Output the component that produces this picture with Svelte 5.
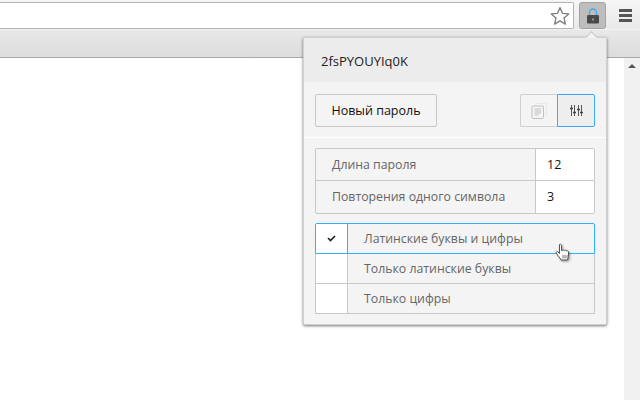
<script lang="ts">
	const settings = [
		{ label: 'Длина пароля', value: '12' },
		{ label: 'Повторения одного символа', value: '3' }
	];
	const modes = [
		{ label: 'Латинские буквы и цифры', active: true },
		{ label: 'Только латинские буквы', active: false },
		{ label: 'Только цифры', active: false }
	];
</script>

<div class="browser">
	<header class="chrome">
		<div class="toolbar">
			<div class="omnibox">
				<svg class="star" width="20" height="20" viewBox="0 0 20 20">
					<path d="M10 1.600l2.500 5.700 6.200.6-4.700 4.100 1.400 6.100-5.400-3.200-5.400 3.200 1.400-6.100L1.300 7.900l6.200-.6z" fill="#fff" stroke="#7c7c7c" stroke-width="1.300" stroke-linejoin="round" />
				</svg>
			</div>
			<div class="ext-button">
				<svg width="14" height="16" viewBox="0 0 14 16">
					<path d="M3.500 7V4.500a3.500 3.500 0 0 1 7 0V7" fill="none" stroke="#45a9ee" stroke-width="1.300" />
					<rect x="1" y="7" width="12" height="8.500" rx="1.200" fill="#4a4a4c" />
					<rect x="6.500" y="10.500" width="1" height="2" fill="#ddd" />
				</svg>
			</div>
			<div class="menu-icon"><span></span><span></span><span></span></div>
		</div>
		<div class="bookmarks"></div>
	</header>
	<main class="page">
		<div class="scrollbar"><span class="arrow"></span></div>
	</main>

	<div class="popup">
		<div class="password">2fsPYOUYIq0K</div>
		<div class="actions">
			<button class="new-password">Новый пароль</button>
			<div class="segmented">
				<button class="seg">
					<svg width="16" height="16" viewBox="0 0 16 16">
						<rect x="4.500" y="0.500" width="11" height="12" rx="1" fill="none" stroke="#e8e8e8" />
						<rect x="1" y="3" width="11.500" height="12.500" rx="1" fill="#f4f4f4" stroke="#c0c0c0" />
						<path d="M3.500 6h6.500M3.500 8h6.500M3.500 10h6.500M3.500 12h4" stroke="#c0c0c0" fill="none" />
					</svg>
				</button>
				<button class="seg selected">
					<svg width="13" height="13" viewBox="0 0 13 13">
						<path d="M1.500 1v11M4.500 1v11M8.500 1v11M11.500 1v11" stroke="#555" fill="none" />
						<path d="M0 4.500h3M3 8.500h3M7 5.500h3M10 8.500h3" stroke="#444" stroke-width="1.300" fill="none" />
					</svg>
				</button>
			</div>
		</div>
		<div class="options">
			<div class="settings">
				{#each settings as row}
					<div class="setting">
						<span class="setting-label">{row.label}</span>
						<span class="setting-value">{row.value}</span>
					</div>
				{/each}
			</div>
			<div class="modes">
				{#each modes as mode}
					<div class="mode" class:active={mode.active}>
						<span class="check">
							{#if mode.active}
								<svg width="9" height="7" viewBox="0 0 9 7">
									<path d="M1 3l2.500 2.500L8 1" fill="none" stroke="#222" stroke-width="1.700" />
								</svg>
							{/if}
						</span>
						<span class="mode-label">{mode.label}</span>
					</div>
				{/each}
			</div>
		</div>
	</div>

	<svg class="cursor" width="17" height="20" viewBox="0 0 17 20">
		<path d="M4.500 1.500c1-.6 2 0 2 1v5l1 .1c.2-.8 1.800-.8 2 .1.400-.7 1.800-.6 2 .3.500-.5 1.900-.2 2 .8v4.700c0 1.500-.8 2-1 3.500H6c-.5-1.500-1.500-2.500-3-4.500L1.300 10c-.5-1 .8-1.900 1.700-1.100l1.500 1.600z" fill="#fff" stroke="#555" />
		<path d="M8 12v3.500M10 12v3.500M12 12v3.500" stroke="#777" fill="none" />
	</svg>
</div>

<style>
	:global(body) {
		margin: 0;
	}

	.browser {
		position: relative;
		width: 640px;
		height: 400px;
		display: flex;
		flex-direction: column;
		overflow: hidden;
		background: #fff;
		font-family: 'Open Sans', sans-serif;
	}

	.chrome {
		height: 58px;
		flex: none;
		background: linear-gradient(#f6f6f6, #dcdcdc);
		border-bottom: 1px solid #a9a9a9;
		box-sizing: border-box;
	}

	.toolbar {
		height: 29px;
		display: flex;
		align-items: flex-start;
		box-sizing: border-box;
		padding-top: 2px;
	}

	.omnibox {
		width: 574px;
		height: 27px;
		box-sizing: border-box;
		background: #fff;
		border: 1px solid #b4b4b4;
		border-left: none;
		border-radius: 0 2px 2px 0;
		display: flex;
		justify-content: flex-end;
		align-items: center;
		padding-right: 3px;
	}

	.ext-button {
		width: 27px;
		height: 27px;
		margin-left: 5px;
		box-sizing: border-box;
		background: #bdbdbd;
		border: 1px solid #a3a3a3;
		border-radius: 3px;
		display: flex;
		align-items: center;
		justify-content: center;
	}

	.menu-icon {
		width: 13px;
		margin: 7px 0 0 13px;
		display: flex;
		flex-direction: column;
		gap: 2px;
	}

	.menu-icon span {
		height: 3px;
		background: #555;
	}

	.bookmarks {
		height: 28px;
		border-top: 1px solid #f2f2f2;
		box-sizing: border-box;
	}

	.page {
		flex: 1;
		display: flex;
		justify-content: flex-end;
	}

	.scrollbar {
		width: 16px;
		background: #f1f1f1;
		display: flex;
		justify-content: center;
		padding-top: 6px;
	}

	.arrow {
		width: 0;
		height: 0;
		border-left: 4px solid transparent;
		border-right: 4px solid transparent;
		border-bottom: 4px solid #555;
	}

	.popup {
		position: absolute;
		left: 303px;
		top: 37px;
		width: 304px;
		height: 288px;
		box-sizing: border-box;
		background: #f4f4f4;
		border: 1px solid #d0d0d0;
		border-radius: 2px;
		box-shadow: 0 1px 3px rgba(0, 0, 0, 0.55);
	}

	.popup::before {
		content: '';
		position: absolute;
		right: 10px;
		top: -5px;
		width: 8px;
		height: 8px;
		background: #f2f2f2;
		border-top: 1px solid #c4c4c4;
		border-left: 1px solid #c4c4c4;
		transform: rotate(45deg);
	}

	.password {
		position: relative;
		height: 44px;
		padding: 0 17px;
		background: #ececec;
		font-size: 13px;
		line-height: 46px;
		color: #222;
	}

	.actions {
		height: 56px;
		box-sizing: border-box;
		padding: 12px 11px 0;
		display: flex;
		justify-content: space-between;
		align-items: flex-start;
		border-bottom: 1px solid #fff;
	}

	button {
		font-family: inherit;
		margin: 0;
		padding: 0;
		box-sizing: border-box;
	}

	.new-password {
		width: 122px;
		height: 33px;
		background: #f4f4f4;
		border: 1px solid #c8c8c8;
		border-radius: 2px;
		font-size: 12.5px;
		color: #111;
	}

	.segmented {
		display: flex;
	}

	.seg {
		width: 37px;
		height: 33px;
		background: #f4f4f4;
		border: 1px solid #cfcfcf;
		border-right: none;
		border-radius: 2px 0 0 2px;
		display: flex;
		align-items: center;
		justify-content: center;
	}

	.seg.selected {
		width: 38px;
		background: #eee;
		border: 1px solid #3aa9f5;
		border-radius: 0 2px 2px 0;
	}

	.options {
		padding: 10px 11px 0;
		display: flex;
		flex-direction: column;
		gap: 9px;
	}

	.settings {
		border: 1px solid #c8c8c8;
		border-radius: 2px;
	}

	.setting {
		display: flex;
		height: 31px;
		font-size: 12.3px;
	}

	.setting + .setting {
		height: 32px;
		border-top: 1px solid #c8c8c8;
	}

	.setting-label {
		flex: 1;
		padding-left: 16px;
		line-height: 31px;
		color: #666;
	}

	.setting-value {
		width: 59px;
		box-sizing: border-box;
		padding-left: 11px;
		line-height: 31px;
		background: #fff;
		border-left: 1px solid #c8c8c8;
		font-size: 12.5px;
		color: #111;
	}

	.modes {
		display: flex;
		flex-direction: column;
	}

	.mode {
		display: flex;
		height: 30px;
		box-sizing: border-box;
		border: 1px solid #c8c8c8;
		border-top: none;
		font-size: 12.3px;
		color: #666;
	}

	.mode.active {
		height: 31px;
		border: 1px solid #2fb0fb;
		border-radius: 2px 2px 0 0;
	}

	.check {
		width: 32px;
		flex: none;
		box-sizing: border-box;
		background: #fff;
		border-right: 1px solid #c8c8c8;
		display: flex;
		align-items: center;
		justify-content: center;
	}

	.mode.active .check {
		border-right-color: #2fb0fb;
	}

	.mode-label {
		padding-left: 16px;
		line-height: 30px;
	}

	.cursor {
		position: absolute;
		left: 555px;
		top: 243px;
		filter: drop-shadow(1px 1px 1px rgba(0, 0, 0, 0.4));
	}
</style>
